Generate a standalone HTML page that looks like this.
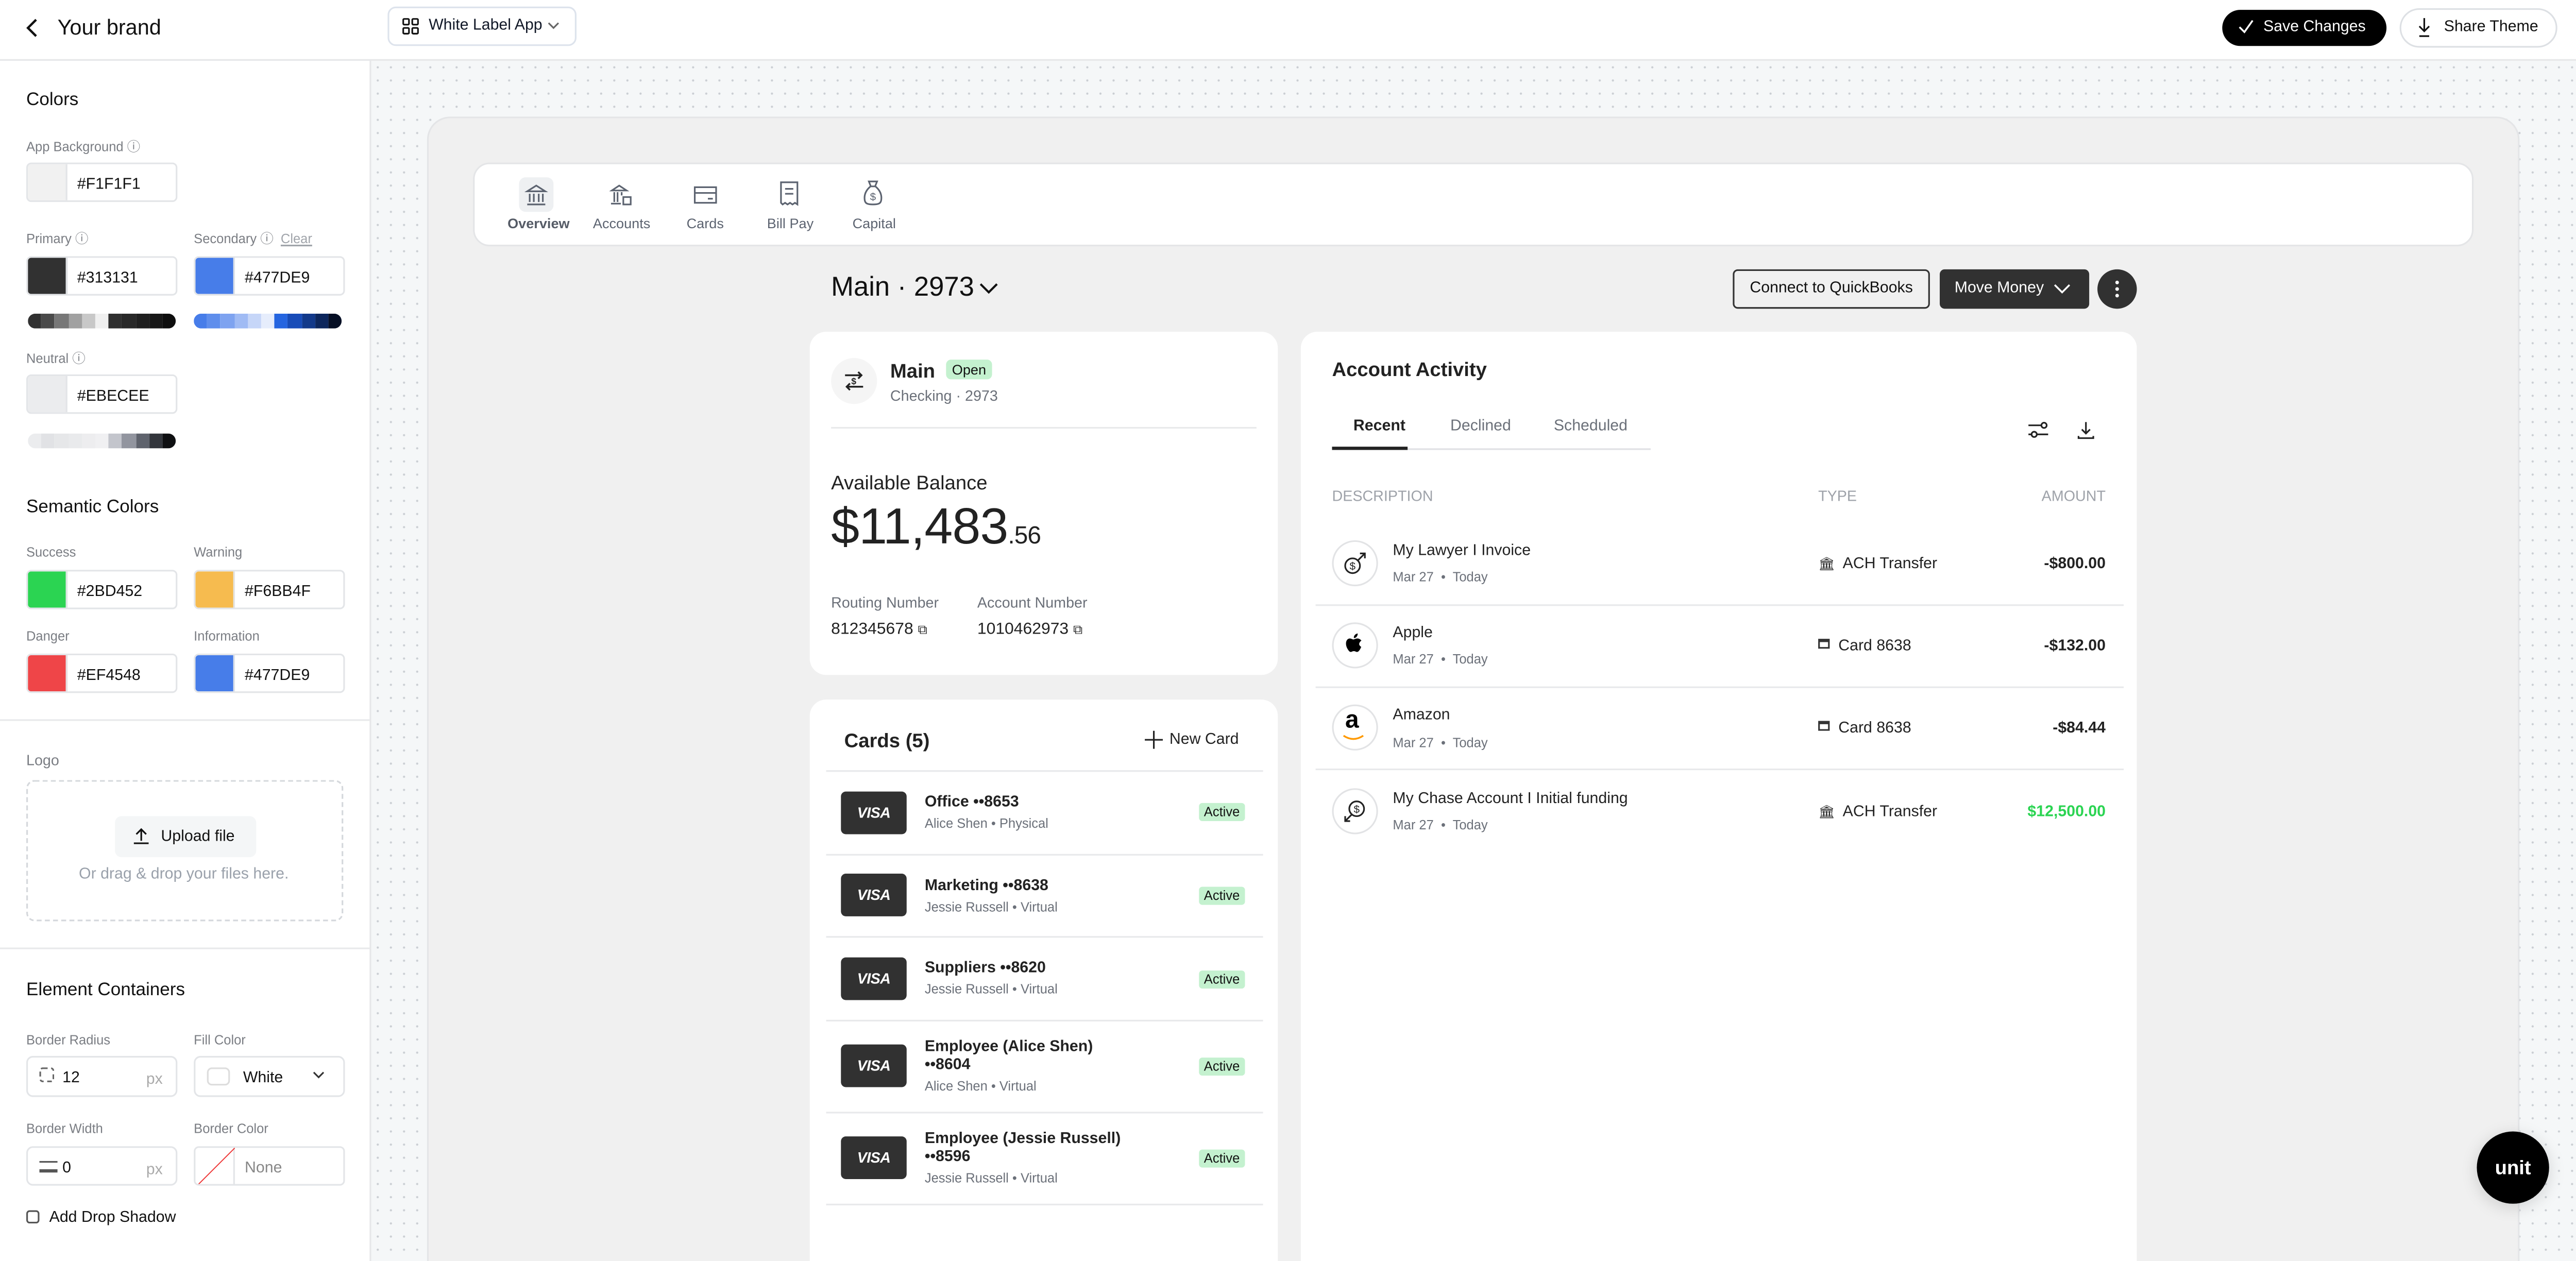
<!DOCTYPE html>
<html><head><meta charset="utf-8">
<style>
*{box-sizing:border-box;margin:0;padding:0}
html,body{width:5118px;height:2446px;overflow:hidden;background:#fff}
#r{position:absolute;left:0;top:0;width:1606px;height:768px;transform:scale(3.188);transform-origin:0 0;font-family:"Liberation Sans",sans-serif;color:#111;overflow:hidden}
.a{position:absolute}
.lbl{position:absolute;font-size:8px;color:#7a7d83}
.inp{position:absolute;height:24px;border:1px solid #e3e5e8;border-radius:3px;background:#fff;overflow:hidden}
.inp .sw{position:absolute;left:0;top:0;bottom:0;width:24px;border-right:1px solid #e3e5e8}
.inp span{position:absolute;left:30px;top:7px;font-size:9.5px;color:#111}
.bar{position:absolute;height:9px;border-radius:5px;overflow:hidden;display:flex}
.bar i{flex:1}
.h{position:absolute;font-size:11px;font-weight:500;color:#111}
.divh{position:absolute;height:1px;background:#e8e9eb}
.card{position:absolute;background:#fff;border-radius:10px}
.gray{color:#6b7079}
.badge{position:absolute;background:#c4f1cf;color:#111;border-radius:2px;font-size:8px;padding:1px 3px}
.visa{position:absolute;width:40px;height:26px;background:#313131;border-radius:3px;color:#fff;font-weight:bold;font-style:italic;font-size:9px;text-align:center;line-height:26px;letter-spacing:-.2px}
</style></head><body><div id="r">
<div class="a" style="left:0;top:0;width:1606px;height:37px;border-bottom:1px solid #e6e7e9;background:#fff"></div>
<svg class="a" style="left:14px;top:10px" width="12" height="14" viewBox="0 0 12 14"><path d="M8 2L3 7l5 5" fill="none" stroke="#111" stroke-width="1.4"/></svg>
<div class="a" style="left:35px;top:9px;font-size:13px">Your brand</div>
<div class="a" style="left:236px;top:4px;width:115px;height:24px;border:1px solid #dde3ec;border-radius:5px"></div>
<svg class="a" style="left:245px;top:11px" width="10" height="10" viewBox="0 0 10 10"><g fill="none" stroke="#111" stroke-width="1"><rect x=".5" y=".5" width="3.5" height="3.5" rx=".6"/><rect x="6" y=".5" width="3.5" height="3.5" rx=".6"/><rect x=".5" y="6" width="3.5" height="3.5" rx=".6"/><rect x="6" y="6" width="3.5" height="3.5" rx=".6"/></g></svg>
<div class="a" style="left:261px;top:10px;font-size:9.5px;color:#111827">White Label App</div>
<svg class="a" style="left:333px;top:13px" width="8" height="6" viewBox="0 0 8 6"><path d="M1 1l3 3 3-3" fill="none" stroke="#666" stroke-width="1"/></svg>
<div class="a" style="left:1353px;top:6px;width:100px;height:22px;background:#000;border-radius:11px;color:#fff;font-size:9.5px;line-height:22px;padding-left:25px">Save Changes</div>
<svg class="a" style="left:1362px;top:11px" width="11" height="11" viewBox="0 0 11 11"><path d="M1.5 5.5l3 3 5-7" fill="none" stroke="#fff" stroke-width="1.1"/></svg>
<div class="a" style="left:1461px;top:5px;width:96px;height:24px;border:1px solid #dde0e4;border-radius:12px;font-size:9.5px;line-height:22px;padding-left:26px">Share Theme</div>
<svg class="a" style="left:1471px;top:10px" width="10" height="13" viewBox="0 0 10 13"><path d="M5 1v8M2 6l3 3 3-3M2 12h6" fill="none" stroke="#111" stroke-width="1"/></svg>

<div class="a" style="left:225px;top:37px;width:1px;height:740px;background:#e6e7e9"></div>
<div class="h" style="left:16px;top:55px">Colors</div>
<div class="lbl" style="left:16px;top:84px">App Background ⓘ</div>
<div class="inp" style="left:16px;top:99px;width:92px"><div class="sw" style="background:#f1f1f1"></div><span>#F1F1F1</span></div>
<div class="lbl" style="left:16px;top:140px">Primary ⓘ</div>
<div class="lbl" style="left:118px;top:140px">Secondary ⓘ &nbsp;<u style="color:#a0a4aa">Clear</u></div>
<div class="inp" style="left:16px;top:156px;width:92px"><div class="sw" style="background:#313131"></div><span>#313131</span></div>
<div class="inp" style="left:118px;top:156px;width:92px"><div class="sw" style="background:#477de9"></div><span>#477DE9</span></div>
<div class="bar" style="left:17px;top:191px;width:90px"><i style="background:#313131"></i><i style="background:#4a4a4a"></i><i style="background:#777"></i><i style="background:#a1a1a1"></i><i style="background:#c8c8c8"></i><i style="background:#f0f0f0"></i><i style="background:#2f2f2f"></i><i style="background:#282828"></i><i style="background:#1f1f1f"></i><i style="background:#171717"></i><i style="background:#0e0e0e"></i></div>
<div class="bar" style="left:118px;top:191px;width:90px"><i style="background:#477de9"></i><i style="background:#5f8eec"></i><i style="background:#7ea3f0"></i><i style="background:#a0bbf4"></i><i style="background:#c6d6f8"></i><i style="background:#e6edfc"></i><i style="background:#2565e0"></i><i style="background:#184cb8"></i><i style="background:#12398a"></i><i style="background:#0c265c"></i><i style="background:#060f25"></i></div>
<div class="lbl" style="left:16px;top:213px">Neutral ⓘ</div>
<div class="inp" style="left:16px;top:228px;width:92px"><div class="sw" style="background:#ebecee"></div><span>#EBECEE</span></div>
<div class="bar" style="left:17px;top:264px;width:90px"><i style="background:#ebecee"></i><i style="background:#e1e2e5"></i><i style="background:#e6e7e9"></i><i style="background:#e9eaec"></i><i style="background:#ededef"></i><i style="background:#f0f0f2"></i><i style="background:#c3c5cc"></i><i style="background:#92959f"></i><i style="background:#5f636d"></i><i style="background:#33363c"></i><i style="background:#0f1012"></i></div>
<div class="h" style="left:16px;top:303px">Semantic Colors</div>
<div class="lbl" style="left:16px;top:332px">Success</div>
<div class="lbl" style="left:118px;top:332px">Warning</div>
<div class="inp" style="left:16px;top:347px;width:92px"><div class="sw" style="background:#2bd452"></div><span>#2BD452</span></div>
<div class="inp" style="left:118px;top:347px;width:92px"><div class="sw" style="background:#f6bb4f"></div><span>#F6BB4F</span></div>
<div class="lbl" style="left:16px;top:383px">Danger</div>
<div class="lbl" style="left:118px;top:383px">Information</div>
<div class="inp" style="left:16px;top:398px;width:92px"><div class="sw" style="background:#ef4548"></div><span>#EF4548</span></div>
<div class="inp" style="left:118px;top:398px;width:92px"><div class="sw" style="background:#477de9"></div><span>#477DE9</span></div>
<div class="divh" style="left:0;top:438px;width:225px"></div>
<div class="lbl" style="left:16px;top:458px;font-size:9px">Logo</div>
<div class="a" style="left:16px;top:475px;width:193px;height:86px;border:1px dashed #d5d8dc;border-radius:5px"></div>
<div class="a" style="left:70px;top:497px;width:86px;height:25px;background:#f4f6f7;border-radius:4px;font-size:9.5px;line-height:25px;padding-left:28px">Upload file</div>
<svg class="a" style="left:80px;top:503px" width="12" height="12" viewBox="0 0 12 12"><path d="M6 9V2M3 5l3-3 3 3M1.5 10.5h9" fill="none" stroke="#111" stroke-width="1"/></svg>
<div class="a" style="left:48px;top:527px;font-size:9.5px;color:#9aa1ab">Or drag &amp; drop your files here.</div>
<div class="divh" style="left:0;top:577px;width:225px"></div>
<div class="h" style="left:16px;top:597px">Element Containers</div>
<div class="lbl" style="left:16px;top:629px">Border Radius</div>
<div class="lbl" style="left:118px;top:629px">Fill Color</div>
<div class="inp" style="left:16px;top:643px;width:92px;height:25px;border-radius:4px"><span style="left:7px;top:6px;width:9px;height:9px;border:1px dashed #666;border-radius:2px"></span><span style="left:21px;top:7px">12</span><span style="left:72px;top:8px;color:#aaa">px</span></div>
<div class="inp" style="left:118px;top:643px;width:92px;height:25px;border-radius:4px"><span style="left:7px;top:6px;width:14px;height:11px;border:1px solid #ddd;border-radius:3px"></span><span style="left:29px;top:7px">White</span></div>
<svg class="a" style="left:190px;top:652px" width="8" height="6" viewBox="0 0 8 6"><path d="M1 1l3 3 3-3" fill="none" stroke="#333" stroke-width="1"/></svg>
<div class="lbl" style="left:16px;top:683px">Border Width</div>
<div class="lbl" style="left:118px;top:683px">Border Color</div>
<div class="inp" style="left:16px;top:698px;width:92px;height:24px;border-radius:4px"><span style="left:7px;top:8px;width:11px;height:7px;border-top:1px solid #555;border-bottom:2px solid #555"></span><span style="left:21px;top:7px">0</span><span style="left:72px;top:8px;color:#aaa">px</span></div>
<div class="inp" style="left:118px;top:698px;width:92px;height:24px"><div class="sw"><svg width="24" height="24"><path d="M0 24L24 0" stroke="#e33" stroke-width=".6"/></svg></div><span style="color:#888">None</span></div>
<div class="a" style="left:16px;top:737px;width:8px;height:8px;border:1px solid #555;border-radius:2px"></div>
<div class="a" style="left:30px;top:736px;font-size:9.5px">Add Drop Shadow</div>

<div class="a" style="left:226px;top:37px;width:1380px;height:740px;background-color:#f5f7f8;background-image:radial-gradient(#c9cdd2 .5px,transparent .8px);background-size:8px 8px"></div>
<div class="a" style="left:260px;top:71px;width:1274px;height:720px;background:#f0f0f0;border:1px solid #e4e5e7;border-radius:14px"></div>
<div class="card" style="left:288px;top:99px;width:1218px;height:51px;border:1px solid #e4e5e7"></div>
<div class="a" style="left:316px;top:108px;width:21px;height:21px;background:#eef0f2;border-radius:4px"></div>
<svg class="a" style="left:319px;top:111px" width="15" height="15" viewBox="0 0 15 15"><g fill="none" stroke="#5c6370" stroke-width="1"><path d="M2 5.5L7.5 2 13 5.5z"/><path d="M3.5 7v5M6 7v5M9 7v5M11.5 7v5M2 13.5h11"/></g></svg>
<svg class="a" style="left:371px;top:111px" width="15" height="15" viewBox="0 0 15 15"><g fill="none" stroke="#5c6370" stroke-width="1"><path d="M1.5 5L6 2l4.5 3z"/><path d="M3 6v6M5 6v6M7.5 6v2M1 13h6"/><rect x="8.5" y="9" width="4.5" height="4.5"/></g></svg>
<svg class="a" style="left:422px;top:111px" width="15" height="15" viewBox="0 0 15 15"><g fill="none" stroke="#5c6370" stroke-width="1"><rect x="1" y="3" width="13" height="9.5"/><path d="M1 6.5h13M9 10h3"/></g></svg>
<svg class="a" style="left:473px;top:110px" width="15" height="16" viewBox="0 0 15 16"><g fill="none" stroke="#5c6370" stroke-width="1"><path d="M2.5 1h10v13.5l-1.5-1-1.5 1-1.5-1-1.5 1-1.5-1-1.5 1-1-1z"/><path d="M5 5h5M5 8h5"/></g></svg>
<svg class="a" style="left:524px;top:109px" width="15" height="17" viewBox="0 0 15 17"><g fill="none" stroke="#5c6370" stroke-width="1"><path d="M5 1.5h5L8.8 4.5h-2.6z"/><path d="M6 4.5C3 7 2 10 2.5 13c.3 1.8 1.5 2.5 5 2.5s4.7-.7 5-2.5C13 10 12 7 9 4.5"/></g><text x="7.5" y="13" font-size="6.5" text-anchor="middle" fill="#5c6370" font-family="Liberation Sans">$</text></svg>
<div class="a" style="left:309px;top:131px;font-size:8.5px;color:#555b66;font-weight:bold">Overview</div>
<div class="a" style="left:361px;top:131px;font-size:8.5px;color:#5c6370">Accounts</div>
<div class="a" style="left:418px;top:131px;font-size:8.5px;color:#5c6370">Cards</div>
<div class="a" style="left:467px;top:131px;font-size:8.5px;color:#5c6370">Bill Pay</div>
<div class="a" style="left:519px;top:131px;font-size:8.5px;color:#5c6370">Capital</div>

<div class="a" style="left:506px;top:166px;font-size:16.5px">Main · 2973</div>
<svg class="a" style="left:596px;top:171px" width="12" height="9" viewBox="0 0 12 9"><path d="M1 2l5 5 5-5" fill="none" stroke="#111" stroke-width="1.3"/></svg>
<div class="a" style="left:1055px;top:164px;width:120px;height:24px;border:1px solid #333;border-radius:3px;font-size:9.5px;line-height:22px;text-align:center">Connect to QuickBooks</div>
<div class="a" style="left:1181px;top:164px;width:91px;height:24px;background:#313131;border-radius:3px;font-size:9.5px;line-height:24px;color:#fff;padding-left:9px">Move Money</div>
<svg class="a" style="left:1250px;top:172px" width="11" height="8" viewBox="0 0 11 8"><path d="M1 1.5l4.5 4.5 4.5-4.5" fill="none" stroke="#fff" stroke-width="1.1"/></svg>
<div class="a" style="left:1277px;top:164px;width:24px;height:24px;background:#313131;border-radius:12px"></div>
<svg class="a" style="left:1286px;top:169px" width="6" height="14"><circle cx="3" cy="3" r="1.1" fill="#fff"/><circle cx="3" cy="7" r="1.1" fill="#fff"/><circle cx="3" cy="11" r="1.1" fill="#fff"/></svg>

<div class="card" style="left:493px;top:202px;width:285px;height:209px"></div>
<div class="a" style="left:506px;top:218px;width:28px;height:28px;border-radius:14px;background:#f5f5f5"></div>
<svg class="a" style="left:513px;top:225px" width="14" height="14" viewBox="0 0 14 14"><g fill="none" stroke="#222" stroke-width="1.1"><path d="M1.5 3.5h10M9.5 1.5l2 2-2 2M12.5 10.5h-10M4.5 8.5l-2 2 2 2"/></g><text x="6.8" y="9" font-size="5.5" font-weight="bold" text-anchor="middle" fill="#222" font-family="Liberation Sans">$</text></svg>
<div class="a" style="left:542px;top:219px;font-size:12px;font-weight:bold;color:#222">Main</div>
<div class="a" style="left:576px;top:219px;width:28px;height:12px;background:#c4f1cf;border-radius:3px;font-size:8.5px;line-height:12px;text-align:center">Open</div>
<div class="a gray" style="left:542px;top:236px;font-size:9px">Checking · 2973</div>
<div class="divh" style="left:506px;top:260px;width:259px"></div>
<div class="a" style="left:506px;top:287px;font-size:12px;color:#222">Available Balance</div>
<div class="a" style="left:506px;top:303px;font-size:31px;color:#222;letter-spacing:-.3px">$11,483<span style="font-size:15px">.56</span></div>
<div class="a gray" style="left:506px;top:362px;font-size:9px">Routing Number</div>
<div class="a gray" style="left:595px;top:362px;font-size:9px">Account Number</div>
<div class="a" style="left:506px;top:378px;font-size:10px;color:#222">812345678 <span style="font-size:8px">⧉</span></div>
<div class="a" style="left:595px;top:378px;font-size:10px;color:#222">1010462973 <span style="font-size:8px">⧉</span></div>

<div class="card" style="left:493px;top:426px;width:285px;height:360px"></div>
<div class="a" style="left:514px;top:444px;font-size:12px;font-weight:bold;color:#222">Cards (5)</div>
<svg class="a" style="left:697px;top:445px" width="11" height="11"><path d="M5.5 0v11M0 5.5h11" stroke="#222" stroke-width="1"/></svg>
<div class="a" style="left:712px;top:445px;font-size:9.5px;color:#222">New Card</div>
<div class="divh" style="left:503px;top:469px;width:266px"></div>
<div class="visa" style="left:512px;top:482px">VISA</div>
<div class="a" style="left:563px;top:483px;font-size:9.5px;font-weight:bold;color:#222">Office ••8653</div>
<div class="a gray" style="left:563px;top:497px;font-size:8px">Alice Shen • Physical</div>
<div class="badge" style="left:730px;top:489px">Active</div>
<div class="divh" style="left:503px;top:520px;width:266px"></div>
<div class="visa" style="left:512px;top:532px">VISA</div>
<div class="a" style="left:563px;top:534px;font-size:9.5px;font-weight:bold;color:#222">Marketing ••8638</div>
<div class="a gray" style="left:563px;top:548px;font-size:8px">Jessie Russell • Virtual</div>
<div class="badge" style="left:730px;top:540px">Active</div>
<div class="divh" style="left:503px;top:570px;width:266px"></div>
<div class="visa" style="left:512px;top:583px">VISA</div>
<div class="a" style="left:563px;top:584px;font-size:9.5px;font-weight:bold;color:#222">Suppliers ••8620</div>
<div class="a gray" style="left:563px;top:598px;font-size:8px">Jessie Russell • Virtual</div>
<div class="badge" style="left:730px;top:591px">Active</div>
<div class="divh" style="left:503px;top:621px;width:266px"></div>
<div class="visa" style="left:512px;top:636px">VISA</div>
<div class="a" style="left:563px;top:632px;font-size:9.5px;font-weight:bold;color:#222;line-height:11px">Employee (Alice Shen)<br>••8604</div>
<div class="a gray" style="left:563px;top:657px;font-size:8px">Alice Shen • Virtual</div>
<div class="badge" style="left:730px;top:644px">Active</div>
<div class="divh" style="left:503px;top:677px;width:266px"></div>
<div class="visa" style="left:512px;top:692px">VISA</div>
<div class="a" style="left:563px;top:688px;font-size:9.5px;font-weight:bold;color:#222;line-height:11px">Employee (Jessie Russell)<br>••8596</div>
<div class="a gray" style="left:563px;top:713px;font-size:8px">Jessie Russell • Virtual</div>
<div class="badge" style="left:730px;top:700px">Active</div>
<div class="divh" style="left:503px;top:733px;width:266px"></div>

<div class="card" style="left:792px;top:202px;width:509px;height:580px"></div>
<div class="a" style="left:811px;top:218px;font-size:12px;font-weight:bold;color:#222">Account Activity</div>
<div class="a" style="left:824px;top:254px;font-size:9.5px;font-weight:bold;color:#222">Recent</div>
<div class="a gray" style="left:883px;top:254px;font-size:9.5px">Declined</div>
<div class="a gray" style="left:946px;top:254px;font-size:9.5px">Scheduled</div>
<div class="a" style="left:811px;top:273px;width:194px;height:1px;background:#e0e1e4"></div>
<div class="a" style="left:811px;top:272px;width:46px;height:2px;background:#222"></div>
<svg class="a" style="left:1234px;top:256px" width="14" height="12" viewBox="0 0 14 12"><g fill="none" stroke="#222" stroke-width="1"><path d="M1 3h8M1 8.5h2M6 8.5h7"/><circle cx="10.5" cy="3" r="1.6"/><circle cx="4.5" cy="8.5" r="1.6"/></g></svg>
<svg class="a" style="left:1264px;top:256px" width="12" height="12" viewBox="0 0 12 12"><g fill="none" stroke="#222" stroke-width="1"><path d="M6 1v7M3.5 5.5L6 8l2.5-2.5M1.5 9.5v1.3h9V9.5"/></g></svg>
<div class="a" style="left:811px;top:297px;font-size:9px;color:#9ea2a9">DESCRIPTION</div>
<div class="a" style="left:1107px;top:297px;font-size:9px;color:#9ea2a9">TYPE</div>
<div class="a" style="left:1200px;top:297px;width:82px;text-align:right;font-size:9px;color:#9ea2a9">AMOUNT</div>

<div class="a" style="left:811px;top:329px;width:28px;height:28px;border:1px solid #e2e3e5;border-radius:14px"></div>
<svg class="a" style="left:817px;top:335px" width="16" height="16" viewBox="0 0 16 16"><g fill="none" stroke="#222" stroke-width="1"><circle cx="6.5" cy="9.5" r="4.5"/><path d="M10 6l4-4M11 2h3v3"/></g><text x="6.5" y="12" font-size="6.5" text-anchor="middle" fill="#222" font-family="Liberation Sans">$</text></svg>
<div class="a" style="left:848px;top:330px;font-size:9.5px;color:#222">My Lawyer I Invoice</div>
<div class="a gray" style="left:848px;top:347px;font-size:8px">Mar 27 &nbsp;•&nbsp; Today</div>
<div class="a" style="left:1107px;top:338px;font-size:9.5px;color:#222"><span style="font-size:8px">🏛</span>&nbsp; ACH Transfer</div>
<div class="a" style="left:1180px;top:338px;width:102px;text-align:right;font-size:9.5px;font-weight:bold;color:#222">-$800.00</div>
<div class="divh" style="left:801px;top:368px;width:492px"></div>

<div class="a" style="left:811px;top:379px;width:28px;height:28px;border:1px solid #e2e3e5;border-radius:14px"></div>
<svg class="a" style="left:818px;top:384px" width="14" height="16" viewBox="0 0 14 16"><path d="M9.5 8.5c0-1.6 1.3-2.3 1.4-2.4-.8-1.1-2-1.3-2.4-1.3-1-.1-2 .6-2.5.6s-1.3-.6-2.2-.6C2.7 4.8 1.5 5.8 1.5 7.9c0 1.3.5 2.6 1.1 3.5.5.8 1 1.6 1.8 1.6.7 0 1-.5 1.9-.5s1.1.5 1.9.5 1.3-.8 1.8-1.5c.5-.8.7-1.5.8-1.6 0 0-1.4-.6-1.4-2.4zM8 3.7c.4-.5.7-1.2.6-1.9-.6 0-1.3.4-1.7.9-.4.4-.7 1.1-.6 1.8.7.1 1.3-.3 1.7-.8z" fill="#000"/></svg>
<div class="a" style="left:848px;top:380px;font-size:9.5px;color:#222">Apple</div>
<div class="a gray" style="left:848px;top:397px;font-size:8px">Mar 27 &nbsp;•&nbsp; Today</div>
<div class="a" style="left:1107px;top:388px;font-size:9.5px;color:#222"><span style="display:inline-block;width:7px;height:6px;border:1px solid #333;border-top-width:2px;vertical-align:1px"></span>&nbsp; Card 8638</div>
<div class="a" style="left:1180px;top:388px;width:102px;text-align:right;font-size:9.5px;font-weight:bold;color:#222">-$132.00</div>
<div class="divh" style="left:801px;top:418px;width:492px"></div>

<div class="a" style="left:811px;top:429px;width:28px;height:28px;border:1px solid #e2e3e5;border-radius:14px"></div>
<div class="a" style="left:819px;top:430px;font-size:15px;font-weight:bold;color:#000">a</div>
<svg class="a" style="left:817px;top:447px" width="14" height="5"><path d="M1 1q6 4 12 0" fill="none" stroke="#f90" stroke-width="1.1"/></svg>
<div class="a" style="left:848px;top:430px;font-size:9.5px;color:#222">Amazon</div>
<div class="a gray" style="left:848px;top:448px;font-size:8px">Mar 27 &nbsp;•&nbsp; Today</div>
<div class="a" style="left:1107px;top:438px;font-size:9.5px;color:#222"><span style="display:inline-block;width:7px;height:6px;border:1px solid #333;border-top-width:2px;vertical-align:1px"></span>&nbsp; Card 8638</div>
<div class="a" style="left:1180px;top:438px;width:102px;text-align:right;font-size:9.5px;font-weight:bold;color:#222">-$84.44</div>
<div class="divh" style="left:801px;top:468px;width:492px"></div>

<div class="a" style="left:811px;top:480px;width:28px;height:28px;border:1px solid #e2e3e5;border-radius:14px"></div>
<svg class="a" style="left:817px;top:486px" width="16" height="16" viewBox="0 0 16 16"><g fill="none" stroke="#222" stroke-width="1"><circle cx="9" cy="6.5" r="4.5"/><path d="M6 10l-4 4M2 11v3h3"/></g><text x="9" y="9" font-size="6.5" text-anchor="middle" fill="#222" font-family="Liberation Sans">$</text></svg>
<div class="a" style="left:848px;top:481px;font-size:9.5px;color:#222">My Chase Account I Initial funding</div>
<div class="a gray" style="left:848px;top:498px;font-size:8px">Mar 27 &nbsp;•&nbsp; Today</div>
<div class="a" style="left:1107px;top:489px;font-size:9.5px;color:#222"><span style="font-size:8px">🏛</span>&nbsp; ACH Transfer</div>
<div class="a" style="left:1180px;top:489px;width:102px;text-align:right;font-size:9.5px;font-weight:bold;color:#2bd452">$12,500.00</div>

<div class="a" style="left:1508px;top:689px;width:44px;height:44px;border-radius:22px;background:#000;box-shadow:0 2px 10px rgba(0,0,0,.15);color:#fff;font-weight:bold;font-size:12px;text-align:center;line-height:44px">unit</div>
</div></body></html>
